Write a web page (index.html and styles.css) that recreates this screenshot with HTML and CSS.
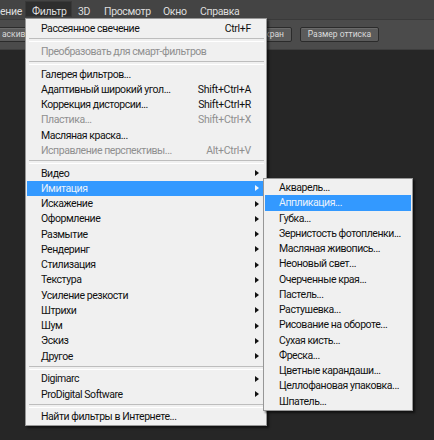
FILE: index.html
```html
<!DOCTYPE html>
<html lang="ru">
<head>
<meta charset="utf-8">
<link rel="stylesheet" href="styles.css">
</head>
<body>
<div class="app">
  <div class="menubar">
    <span class="mb-item first">ение</span>
    <span class="mb-item active w-filter">Фильтр</span>
    <span class="mb-item w-3d">3D</span>
    <span class="mb-item w-view">Просмотр</span>
    <span class="mb-item w-win">Окно</span>
    <span class="mb-item w-help">Справка</span>
  </div>
  <div class="toolbar">
    <span class="tb-btn cut">аскива</span>
    <span class="tb-btn full">кран</span>
    <span class="tb-btn size">Размер оттиска</span>
  </div>
  <div class="canvas"></div>

  <div class="menu main">
    <div class="mi"><span class="lbl">Рассеянное свечение</span><span class="sc">Ctrl+F</span><span class="arr"></span></div>
    <div class="sep"></div>
    <div class="mi dis"><span class="lbl">Преобразовать для смарт-фильтров</span><span class="arr"></span></div>
    <div class="sep"></div>
    <div class="mi"><span class="lbl">Галерея фильтров...</span><span class="arr"></span></div>
    <div class="mi"><span class="lbl">Адаптивный широкий угол...</span><span class="sc">Shift+Ctrl+A</span><span class="arr"></span></div>
    <div class="mi"><span class="lbl">Коррекция дисторсии...</span><span class="sc">Shift+Ctrl+R</span><span class="arr"></span></div>
    <div class="mi dis"><span class="lbl">Пластика...</span><span class="sc">Shift+Ctrl+X</span><span class="arr"></span></div>
    <div class="mi"><span class="lbl">Масляная краска...</span><span class="arr"></span></div>
    <div class="mi dis"><span class="lbl">Исправление перспективы...</span><span class="sc">Alt+Ctrl+V</span><span class="arr"></span></div>
    <div class="sep"></div>
    <div class="mi"><span class="lbl">Видео</span><span class="arr sub"></span></div>
    <div class="mi hl"><span class="lbl">Имитация</span><span class="arr sub"></span></div>
    <div class="mi"><span class="lbl">Искажение</span><span class="arr sub"></span></div>
    <div class="mi"><span class="lbl">Оформление</span><span class="arr sub"></span></div>
    <div class="mi"><span class="lbl">Размытие</span><span class="arr sub"></span></div>
    <div class="mi"><span class="lbl">Рендеринг</span><span class="arr sub"></span></div>
    <div class="mi"><span class="lbl">Стилизация</span><span class="arr sub"></span></div>
    <div class="mi"><span class="lbl">Текстура</span><span class="arr sub"></span></div>
    <div class="mi"><span class="lbl">Усиление резкости</span><span class="arr sub"></span></div>
    <div class="mi"><span class="lbl">Штрихи</span><span class="arr sub"></span></div>
    <div class="mi"><span class="lbl">Шум</span><span class="arr sub"></span></div>
    <div class="mi"><span class="lbl">Эскиз</span><span class="arr sub"></span></div>
    <div class="mi"><span class="lbl">Другое</span><span class="arr sub"></span></div>
    <div class="sep"></div>
    <div class="mi"><span class="lbl">Digimarc</span><span class="arr sub"></span></div>
    <div class="mi"><span class="lbl">ProDigital Software</span><span class="arr sub"></span></div>
    <div class="sep"></div>
    <div class="mi"><span class="lbl">Найти фильтры в Интернете...</span><span class="arr"></span></div>

    <div class="menu submenu">
      <div class="mi"><span class="lbl">Акварель...</span></div>
      <div class="mi hl"><span class="lbl">Аппликация...</span></div>
      <div class="mi"><span class="lbl">Губка...</span></div>
      <div class="mi"><span class="lbl">Зернистость фотопленки...</span></div>
      <div class="mi"><span class="lbl">Масляная живопись...</span></div>
      <div class="mi"><span class="lbl">Неоновый свет...</span></div>
      <div class="mi"><span class="lbl">Очерченные края...</span></div>
      <div class="mi"><span class="lbl">Пастель...</span></div>
      <div class="mi"><span class="lbl">Растушевка...</span></div>
      <div class="mi"><span class="lbl">Рисование на обороте...</span></div>
      <div class="mi"><span class="lbl">Сухая кисть...</span></div>
      <div class="mi"><span class="lbl">Фреска...</span></div>
      <div class="mi"><span class="lbl">Цветные карандаши...</span></div>
      <div class="mi"><span class="lbl">Целлофановая упаковка...</span></div>
      <div class="mi"><span class="lbl">Шпатель...</span></div>
    </div>
  </div>
</div>
</body>
</html>
```

FILE: styles.css
```css
* { box-sizing: border-box; }
html, body { margin: 0; padding: 0; }
body {
  background: #262626;
  width: 434px;
  height: 440px;
  overflow: hidden;
  font-family: Roboto, "Noto Sans", sans-serif;
}
.app {
  position: relative;
  width: 434px;
  height: 440px;
  display: flex;
  flex-direction: column;
}
.menubar {
  height: 20px;
  background: #444444;
  display: flex;
  align-items: flex-start;
  font-size: 10.5px;
  letter-spacing: -0.35px;
  color: #dedede;
  border-bottom: 1px solid #3a3a3a;
}
.mb-item {
  flex: none;
  padding: 0 0 0 7px;
  height: 16px;
  line-height: 21px;
  margin-top: 1px;
  white-space: nowrap;
}
.mb-item.first { width: 25px; padding: 0 6px 0 0; text-align: right; }
.mb-item.w-filter { width: 47px; }
.mb-item.w-3d { width: 25px; padding-left: 6px; }
.mb-item.w-view { width: 59px; }
.mb-item.w-win { width: 37px; }
.mb-item.w-help { width: 51px; }
.mb-item.active {
  background: #2e2e2e;
  box-shadow: inset 0 0 0 1px #393939;
}
.toolbar {
  height: 30px;
  background: #4b4b4b;
  display: flex;
  align-items: center;
  border-bottom: 1px solid #3e3e3e;
}
.tb-btn {
  height: 15px;
  line-height: 13px;
  font-size: 8.5px;
  color: #dcdcdc;
  background: #5b5b5b;
  border: 1px solid #2b2b2b;
  box-shadow: inset 0 1px 0 #6a6a6a;
  border-radius: 2px;
  white-space: nowrap;
}
.tb-btn.cut { margin-left: -6px; width: 40px; padding: 0 0 0 7px; }
.tb-btn.full { margin-left: 220px; width: 38px; text-align: right; padding-right: 7px; }
.tb-btn.size { margin-left: 8px; width: 79px; text-align: center; padding: 0; }
.canvas { flex: 1; background: #262626; }

.menu {
  position: absolute;
  background: #f0f0f0;
  border: 1px solid #979797;
  box-shadow: 2px 2px 2px rgba(0, 0, 0, 0.55);
  font-size: 10.5px;
  letter-spacing: -0.45px;
  color: #111111;
}
.main {
  left: 25px;
  top: 18px;
  width: 242px;
  padding: 2px 0 0;
}
.mi {
  height: 15.25px;
  margin: 0 1px;
  padding: 0 6px 0 14px;
  display: flex;
  align-items: center;
  white-space: nowrap;
}
.lbl { flex: 1; }
.sc { margin-right: 4px; letter-spacing: -0.3px; }
.arr { width: 4px; height: 6px; }
.arr.sub {
  width: 0;
  height: 0;
  border-left: 4px solid #111;
  border-top: 3px solid transparent;
  border-bottom: 3px solid transparent;
}
.mi.dis { color: #8f8f8f; }
.mi.hl { background: #3399ff; color: #eaf2fc; }
.mi.hl .arr.sub { border-left-color: #f4f8fd; }
.sep {
  height: 7.5px;
  margin: 0 2px 0 3px;
  display: flex;
  align-items: center;
}
.sep::before {
  content: "";
  flex: 1;
  height: 2px;
  border-top: 1px solid #bdbdbd;
  border-bottom: 1px solid #ffffff;
}
.submenu {
  left: 237px;
  top: 159px;
  width: 150px;
  padding: 1px 0;
}
```
